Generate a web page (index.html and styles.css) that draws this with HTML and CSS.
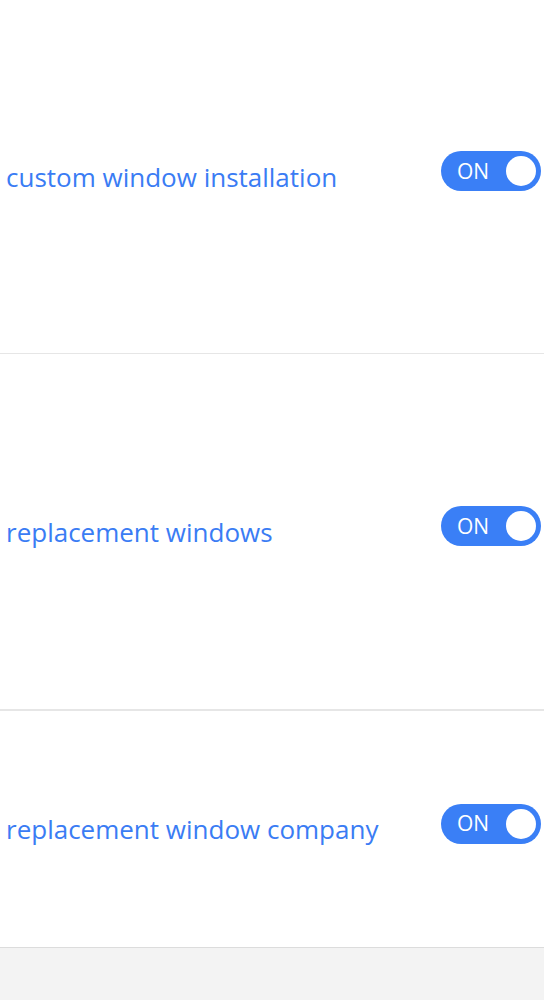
FILE: index.html
```html
<!DOCTYPE html>
<html lang="en">
<head>
    <meta charset="UTF-8">
    <title>Keywords</title>
    <link rel="stylesheet" href="styles.css">
</head>
<body>
    <div class="list">
        <div class="row row-first">
            <span class="label">custom window installation</span>
            <div class="toggle"><span class="toggle-text">ON</span><span class="knob"></span></div>
        </div>
        <div class="row row-mid">
            <span class="label">replacement windows</span>
            <div class="toggle"><span class="toggle-text">ON</span><span class="knob"></span></div>
        </div>
        <div class="row row-last">
            <span class="label">replacement window company</span>
            <div class="toggle"><span class="toggle-text">ON</span><span class="knob"></span></div>
        </div>
    </div>
    <div class="footer"></div>
</body>
</html>
```

FILE: styles.css
```css
*{
    margin: 0;
    padding: 0;
    box-sizing: border-box;
}
body{
    background: #f3f3f3;
    font-family: "Open Sans", "Liberation Sans", sans-serif;
}
.list{
    background: #fff;
}
.row{
    display: flex;
    align-items: center;
    justify-content: space-between;
    padding-left: 6px;
    padding-right: 3px;
    border-bottom: 1px solid #e6e6e6;
}
.row-first{
    height: 354px;
}
.row-mid{
    height: 357px;
    border-bottom-width: 2px;
}
.row-last{
    height: 237px;
    border-bottom-color: #dcdcdc;
}
.label{
    font-size: 26px;
    font-weight: 500;
    color: #3a7cf4;
}
.toggle{
    width: 100px;
    height: 40px;
    border-radius: 20px;
    background: #3a7ff6;
    display: flex;
    align-items: center;
    justify-content: space-between;
    padding-left: 16px;
    padding-right: 5px;
    margin-bottom: 11px;
}
.toggle-text{
    color: #fff;
    font-size: 21px;
    font-weight: 500;
    line-height: 1;
}
.knob{
    width: 30px;
    height: 30px;
    border-radius: 50%;
    background: #fff;
}
.footer{
    height: 60px;
}
```
